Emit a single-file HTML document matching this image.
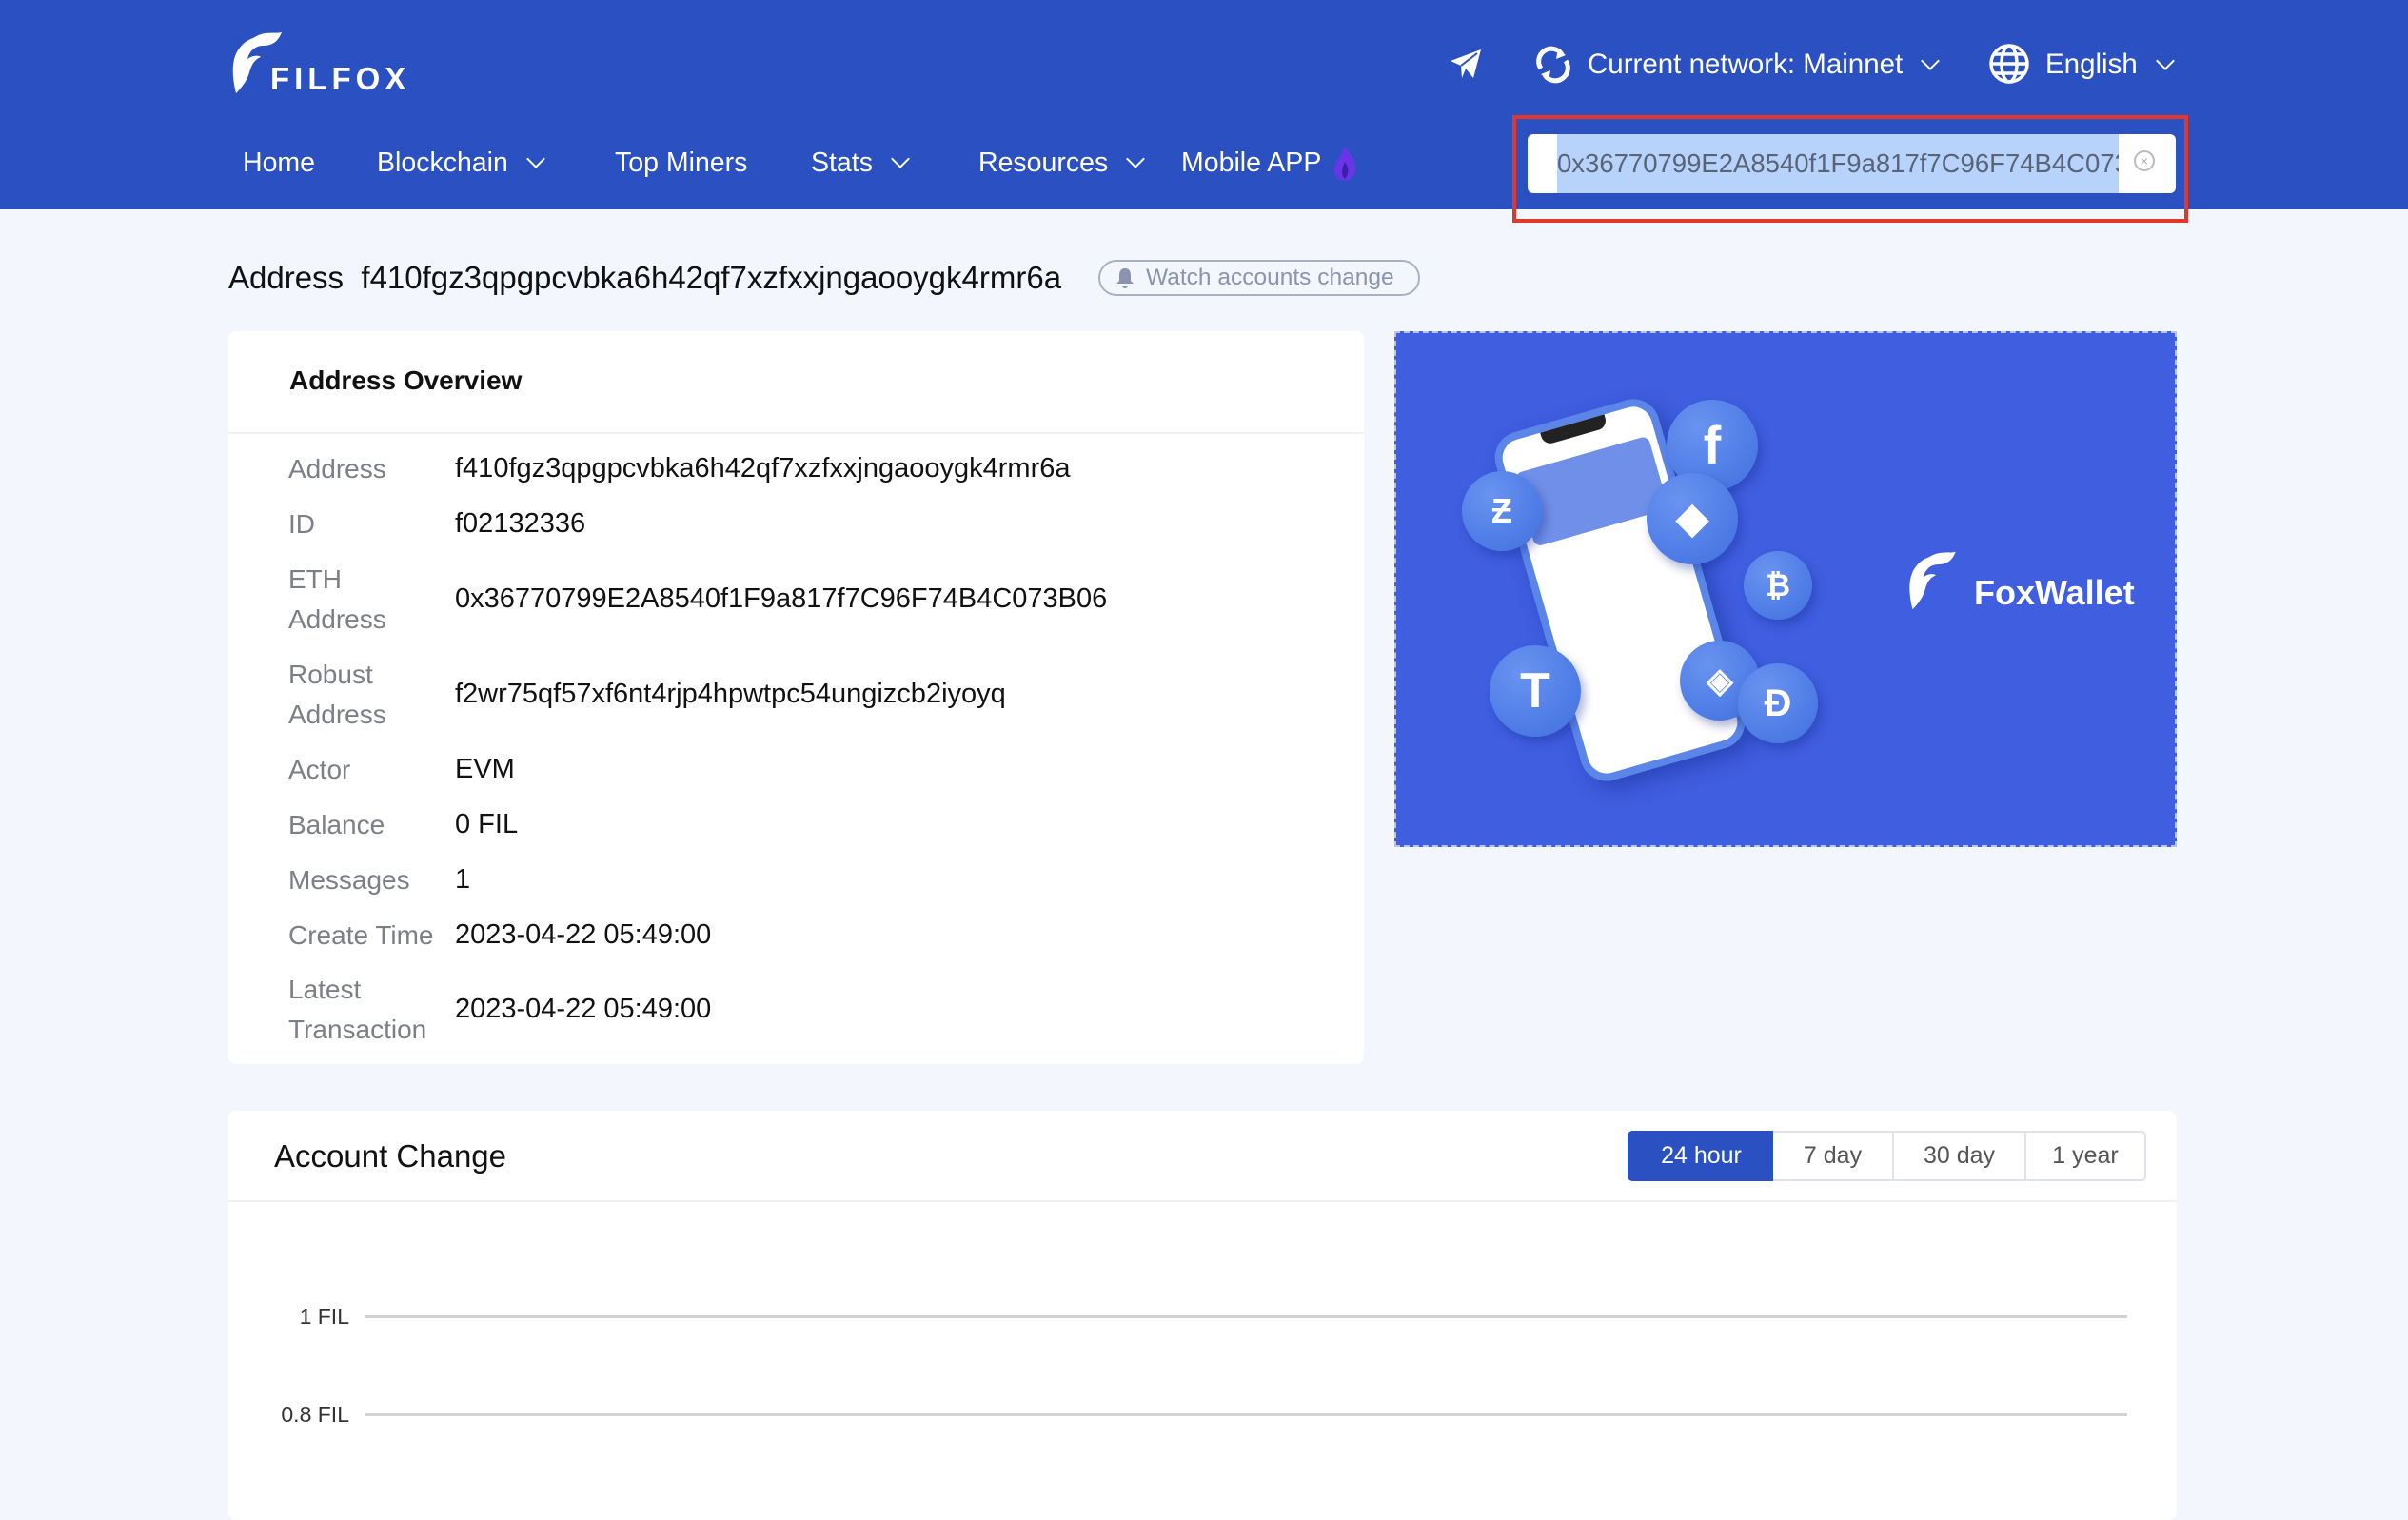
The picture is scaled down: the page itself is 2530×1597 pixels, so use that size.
<!DOCTYPE html>
<html><head><meta charset="utf-8"><style>
*{margin:0;padding:0;box-sizing:border-box}
body{width:2530px;height:1582px;background:#f3f6fc;font-family:"Liberation Sans",sans-serif;position:relative;overflow:hidden;color:#1a1a1a}
.a{position:absolute;white-space:nowrap}
.hdr{position:absolute;left:0;top:0;width:2530px;height:220px;background:#2a50c2}
.nav{color:#fff;font-size:28.5px;top:155px}
.chev{display:inline-block;width:14px;height:14px;border-right:2.5px solid #fff;border-bottom:2.5px solid #fff;transform:rotate(45deg);margin-left:22px;vertical-align:6px}
.card{position:absolute;background:#fff;border-radius:8px}
.lbl{color:#7d7f86;font-size:28px;line-height:42px}
.val{font-size:29px;color:#111}
.btn{position:absolute;top:1188px;height:53px;border:2px solid #dfe2e8;font-size:25px;color:#555;text-align:center;line-height:49px;background:#fff}
.coin{position:absolute;border-radius:50%;background:radial-gradient(circle at 35% 30%,#6a93f0,#3f70e0);box-shadow:4px 6px 10px rgba(20,40,140,.35);color:#fff;text-align:center;font-weight:bold}
</style></head><body>
<div class="hdr"></div>
<svg class="a" style="left:238px;top:32px" width="70" height="70" viewBox="0 0 70 70"><path d="M28 8 C40 0 50 4 58 2 C54 12 48 16 38 16 C30 16 24 22 22 30 C28 26 34 26 36 28 C30 30 26 36 24 44 C22 52 16 60 10 66 C6 50 4 30 14 18 C18 13 22 10 28 8Z" fill="#fff"/></svg>
<div class="a" style="left:284px;top:64px;color:#fff;font-size:33px;font-weight:bold;letter-spacing:5px">FILFOX</div>
<svg class="a" style="left:1522px;top:50px" width="36" height="34" viewBox="0 0 36 34"><path d="M2 14 L34 2 L26 32 L18 22 L14 32 L13 19 Z" fill="#fff"/><path d="M13 19 L30 6" stroke="#2a50c2" stroke-width="2"/></svg>
<svg class="a" style="left:1611px;top:48px" width="42" height="40" viewBox="0 0 42 40"><path d="M8 24 A13 13 0 0 1 30 9" fill="none" stroke="#fff" stroke-width="5"/><path d="M34 16 A13 13 0 0 1 12 31" fill="none" stroke="#fff" stroke-width="5"/><path d="M26 3 L34 10 L24 14Z" fill="#fff"/><path d="M16 37 L8 30 L18 26Z" fill="#fff"/></svg>
<div class="a" style="left:1668px;top:51px;color:#fff;font-size:29.5px">Current network: Mainnet<span class="chev"></span></div>
<svg class="a" style="left:2089px;top:45px" width="44" height="44" viewBox="0 0 44 44"><g fill="none" stroke="#fff" stroke-width="3.5"><circle cx="22" cy="22" r="19"/><ellipse cx="22" cy="22" rx="8" ry="19"/><path d="M3 22 H41 M6 12 H38 M6 32 H38"/></g></svg>
<div class="a" style="left:2149px;top:51px;color:#fff;font-size:29.5px">English<span class="chev"></span></div>
<div class="a nav" style="left:255px">Home</div>
<div class="a nav" style="left:396px">Blockchain<span class="chev"></span></div>
<div class="a nav" style="left:646px">Top Miners</div>
<div class="a nav" style="left:852px">Stats<span class="chev"></span></div>
<div class="a nav" style="left:1028px">Resources<span class="chev"></span></div>
<div class="a nav" style="left:1241px">Mobile APP</div>
<svg class="a" style="left:1400px;top:154px" width="26" height="36" viewBox="0 0 26 36"><path d="M13 0 C20 10 26 16 24 26 C22 33 16 36 13 36 C7 36 2 31 2 24 C2 16 10 10 13 0Z" fill="#6a35e8"/><path d="M13 16 C17 22 18 28 13 34 C9 30 9 24 13 16Z" fill="#3b1fa8"/></svg>
<div class="a" style="left:1589px;top:121px;width:710px;height:113px;border:4px solid #e0392b"></div>
<div class="a" style="left:1605px;top:141px;width:681px;height:62px;background:#fff;border-radius:6px"></div>
<div class="a" style="left:1636px;top:141px;width:590px;height:62px;background:#b7d3fb;color:#5a6478;font-size:27.5px;line-height:62px;overflow:hidden">0x36770799E2A8540f1F9a817f7C96F74B4C073B06</div>
<div class="a" style="left:2242px;top:158px;width:22px;height:22px;border:2px solid #bbb;border-radius:50%;color:#aaa;font-size:14px;line-height:18px;text-align:center">×</div>
<div class="a" style="left:240px;top:273px;font-size:33px;color:#111">Address&nbsp; f410fgz3qpgpcvbka6h42qf7xzfxxjngaooygk4rmr6a</div>
<div class="a" style="left:1154px;top:273px;width:338px;height:38px;border:2px solid #a8b0c8;border-radius:20px;color:#8a93b0;font-size:24.5px;line-height:34px;padding-left:48px">Watch accounts change</div>
<svg class="a" style="left:1172px;top:281px" width="20" height="22" viewBox="0 0 20 22"><path d="M10 1 C5 1 4 5 4 9 V14 L1 17 H19 L16 14 V9 C16 5 15 1 10 1Z M7 19 H13 A3 3 0 0 1 7 19Z" fill="#8a93b0"/></svg>
<div class="card" style="left:240px;top:348px;width:1193px;height:770px">
<div style="position:absolute;left:0;top:106px;width:100%;height:2px;background:#f0f1f4"></div>
</div>
<div class="a" style="left:304px;top:384px;font-size:28px;font-weight:bold;color:#111">Address Overview</div>
<div class="a lbl" style="left:303px;top:472px">Address</div><div class="a val" style="left:478px;top:476px">f410fgz3qpgpcvbka6h42qf7xzfxxjngaooygk4rmr6a</div>
<div class="a lbl" style="left:303px;top:530px">ID</div><div class="a val" style="left:478px;top:534px">f02132336</div>
<div class="a lbl" style="left:303px;top:588px">ETH<br>Address</div><div class="a val" style="left:478px;top:613px">0x36770799E2A8540f1F9a817f7C96F74B4C073B06</div>
<div class="a lbl" style="left:303px;top:688px">Robust<br>Address</div><div class="a val" style="left:478px;top:713px">f2wr75qf57xf6nt4rjp4hpwtpc54ungizcb2iyoyq</div>
<div class="a lbl" style="left:303px;top:788px">Actor</div><div class="a val" style="left:478px;top:792px">EVM</div>
<div class="a lbl" style="left:303px;top:846px">Balance</div><div class="a val" style="left:478px;top:850px">0 FIL</div>
<div class="a lbl" style="left:303px;top:904px">Messages</div><div class="a val" style="left:478px;top:908px">1</div>
<div class="a lbl" style="left:303px;top:962px">Create Time</div><div class="a val" style="left:478px;top:966px">2023-04-22 05:49:00</div>
<div class="a lbl" style="left:303px;top:1019px">Latest<br>Transaction</div><div class="a val" style="left:478px;top:1044px">2023-04-22 05:49:00</div>
<div class="a" style="left:1465px;top:348px;width:822px;height:542px;background:#3f5ee0;border:2px dashed #b8c6ee;overflow:hidden"></div>
<div class="a" style="left:1613px;top:430px;width:178px;height:380px;background:#fff;border:8px solid #5b86e8;border-radius:28px;transform:rotate(-16deg);box-shadow:6px 10px 20px rgba(10,30,120,.35)"><div style="margin:0 auto;width:70px;height:14px;background:#222;border-radius:0 0 10px 10px"></div><div style="margin:20px 8px;height:80px;background:#6f8fe8;border-radius:8px"></div></div>
<div class="coin" style="left:1751px;top:420px;width:96px;height:96px;font-size:56px;line-height:96px">f</div>
<div class="coin" style="left:1730px;top:497px;width:96px;height:96px;font-size:44px;line-height:96px">◆</div>
<div class="coin" style="left:1536px;top:495px;width:84px;height:84px;font-size:36px;line-height:84px">Ƶ</div>
<div class="coin" style="left:1832px;top:579px;width:72px;height:72px;font-size:32px;line-height:72px">₿</div>
<div class="coin" style="left:1565px;top:678px;width:96px;height:96px;font-size:52px;line-height:96px">T</div>
<div class="coin" style="left:1765px;top:673px;width:84px;height:84px;font-size:36px;line-height:84px">◈</div>
<div class="coin" style="left:1826px;top:697px;width:84px;height:84px;font-size:40px;line-height:84px">Đ</div>
<svg class="a" style="left:2000px;top:572px" width="66" height="78" viewBox="0 0 70 70"><path d="M28 8 C40 0 50 4 58 2 C54 12 48 16 38 16 C30 16 24 22 22 30 C28 26 34 26 36 28 C30 30 26 36 24 44 C22 52 16 60 10 66 C6 50 4 30 14 18 C18 13 22 10 28 8Z" fill="#fff"/></svg>
<div class="a" style="left:2074px;top:602px;color:#fff;font-size:36px;font-weight:bold">FoxWallet</div>
<div class="card" style="left:240px;top:1167px;width:2047px;height:430px">
<div style="position:absolute;left:0;top:94px;width:100%;height:2px;background:#f0f1f4"></div>
</div>
<div class="a" style="left:288px;top:1196px;font-size:33px;color:#111">Account Change</div>
<div class="btn" style="left:1710px;width:155px;background:#2a50c2;border-color:#2a50c2;color:#fff;border-radius:5px 0 0 5px">24 hour</div>
<div class="btn" style="left:1863px;width:127px;border-left:none">7 day</div>
<div class="btn" style="left:1988px;width:141px;border-left:2px solid #dfe2e8">30 day</div>
<div class="btn" style="left:2127px;width:128px;border-radius:0 5px 5px 0">1 year</div>
<div class="a" style="left:384px;top:1382px;width:1851px;height:3px;background:#d2d2d2"></div>
<div class="a" style="left:384px;top:1485px;width:1851px;height:3px;background:#d2d2d2"></div>
<div class="a" style="left:250px;top:1370px;width:117px;text-align:right;font-size:23px;color:#333">1 FIL</div>
<div class="a" style="left:250px;top:1473px;width:117px;text-align:right;font-size:23px;color:#333">0.8 FIL</div>
</body></html>
